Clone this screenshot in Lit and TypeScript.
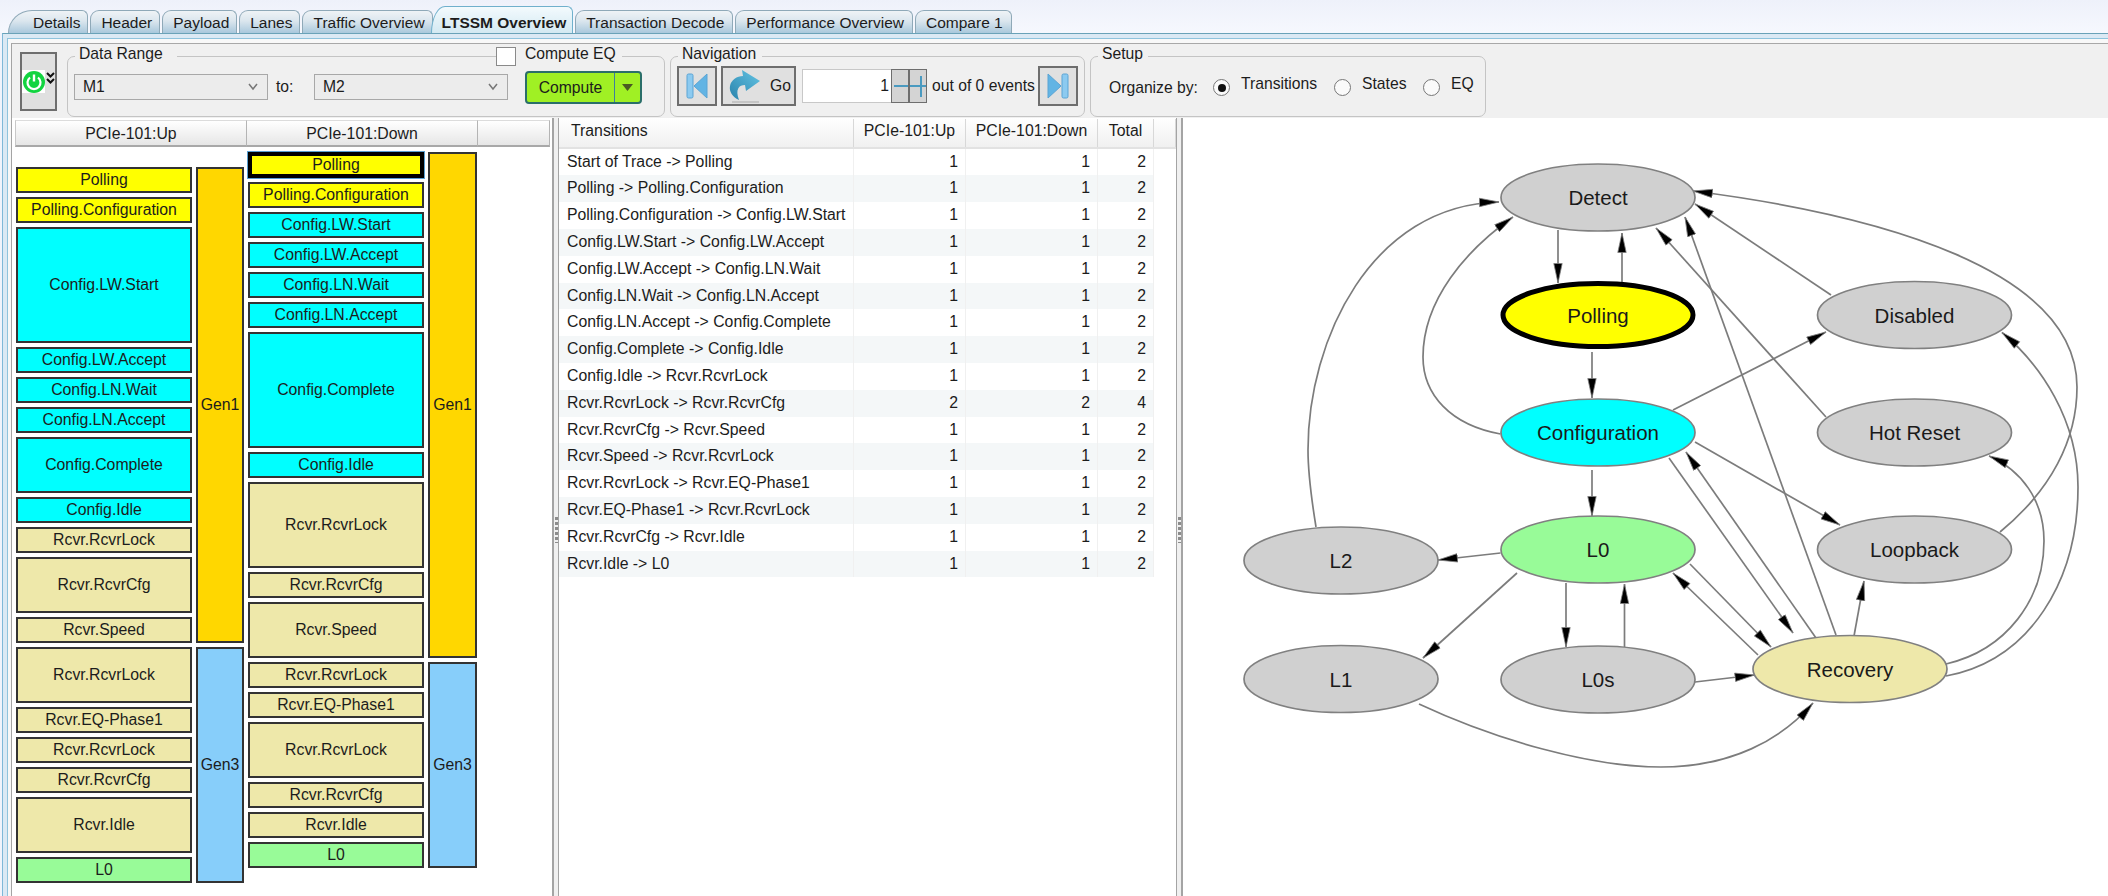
import { html, svg, css, LitElement } from 'lit';
import { customElement } from 'lit/decorators.js';
import { classMap } from 'lit/directives/class-map.js';

const TABS = ['Details', 'Header', 'Payload', 'Lanes', 'Traffic Overview', 'LTSSM Overview', 'Transaction Decode', 'Performance Overview', 'Compare 1'];

type Group = { gen: string, states: [string, number][] };

const LANES: { pad: number, groups: Group[] }[] = [
	{
		pad: 20,
		groups: [
			{
				gen: 'Gen1',
				states: [['Polling', 1], ['Polling.Configuration', 1], ['Config.LW.Start', 4], ['Config.LW.Accept', 1], ['Config.LN.Wait', 1], ['Config.LN.Accept', 1], ['Config.Complete', 2], ['Config.Idle', 1], ['Rcvr.RcvrLock', 1], ['Rcvr.RcvrCfg', 2], ['Rcvr.Speed', 1]],
			},
			{
				gen: 'Gen3',
				states: [['Rcvr.RcvrLock', 2], ['Rcvr.EQ-Phase1', 1], ['Rcvr.RcvrLock', 1], ['Rcvr.RcvrCfg', 1], ['Rcvr.Idle', 2], ['L0', 1]],
			},
		],
	},
	{
		pad: 5,
		groups: [
			{
				gen: 'Gen1',
				states: [['Polling', 1], ['Polling.Configuration', 1], ['Config.LW.Start', 1], ['Config.LW.Accept', 1], ['Config.LN.Wait', 1], ['Config.LN.Accept', 1], ['Config.Complete', 4], ['Config.Idle', 1], ['Rcvr.RcvrLock', 3], ['Rcvr.RcvrCfg', 1], ['Rcvr.Speed', 2]],
			},
			{
				gen: 'Gen3',
				states: [['Rcvr.RcvrLock', 1], ['Rcvr.EQ-Phase1', 1], ['Rcvr.RcvrLock', 2], ['Rcvr.RcvrCfg', 1], ['Rcvr.Idle', 1], ['L0', 1]],
			},
		],
	},
];

const ROWS: [string, number, number, number][] = [
	['Start of Trace -> Polling', 1, 1, 2],
	['Polling -> Polling.Configuration', 1, 1, 2],
	['Polling.Configuration -> Config.LW.Start', 1, 1, 2],
	['Config.LW.Start -> Config.LW.Accept', 1, 1, 2],
	['Config.LW.Accept -> Config.LN.Wait', 1, 1, 2],
	['Config.LN.Wait -> Config.LN.Accept', 1, 1, 2],
	['Config.LN.Accept -> Config.Complete', 1, 1, 2],
	['Config.Complete -> Config.Idle', 1, 1, 2],
	['Config.Idle -> Rcvr.RcvrLock', 1, 1, 2],
	['Rcvr.RcvrLock -> Rcvr.RcvrCfg', 2, 2, 4],
	['Rcvr.RcvrCfg -> Rcvr.Speed', 1, 1, 2],
	['Rcvr.Speed -> Rcvr.RcvrLock', 1, 1, 2],
	['Rcvr.RcvrLock -> Rcvr.EQ-Phase1', 1, 1, 2],
	['Rcvr.EQ-Phase1 -> Rcvr.RcvrLock', 1, 1, 2],
	['Rcvr.RcvrCfg -> Rcvr.Idle', 1, 1, 2],
	['Rcvr.Idle -> L0', 1, 1, 2],
];

// graph coordinates are page pixels, the svg viewBox starts at the panel origin
const NODES: { name: string, x: number, y: number, cls: string }[] = [
	{ name: 'Detect', x: 1597, y: 197.5, cls: 'grey' },
	{ name: 'Polling', x: 1597, y: 315, cls: 'cur' },
	{ name: 'Configuration', x: 1597, y: 432.5, cls: 'cyan' },
	{ name: 'L0', x: 1597, y: 549.5, cls: 'green' },
	{ name: 'L0s', x: 1597, y: 679.5, cls: 'grey' },
	{ name: 'L1', x: 1340, y: 679, cls: 'grey' },
	{ name: 'L2', x: 1340, y: 560.5, cls: 'grey' },
	{ name: 'Recovery', x: 1849, y: 669, cls: 'khaki' },
	{ name: 'Disabled', x: 1913.5, y: 315, cls: 'grey' },
	{ name: 'Hot Reset', x: 1913.5, y: 432.5, cls: 'grey' },
	{ name: 'Loopback', x: 1913.5, y: 549.5, cls: 'grey' },
];

const EDGES = [
	'M1557 230 L1557 283',
	'M1621 283 L1621 233',
	'M1591 352 L1591 398',
	'M1591 470 L1591 516',
	'M1499.5 434 C1450 425 1422 395 1422 357 C1422 300 1465 250 1512 217',
	'M1315 527 C1309 490 1307 470 1307 450 C1307 340 1370 205 1498 202',
	'M1830 295 L1694 204',
	'M1825 417 L1655 228',
	'M1835 635 L1684 217',
	'M1999 532 C2050 490 2076 440 2076 387 C2076 270 1880 215 1692 191',
	'M1672 410 L1825 332',
	'M1694 442 L1839 525',
	'M1668 458 L1792 633',
	'M1815 638 L1685 452',
	'M1689 564 L1770 647',
	'M1757 655 L1672 573',
	'M1499.5 553 L1437 560',
	'M1516 573 L1422 658',
	'M1565 583 L1565 647',
	'M1623.5 647 L1623.5 584',
	'M1694 682 L1753.5 675',
	'M1853 636 L1863 581',
	'M1418 704 C1495 740 1590 767 1660 767 C1730 767 1780 740 1812 703',
	'M1945 664 C2005 650 2043 600 2043 541 C2043 500 2020 470 1988 456',
	'M1945 676 C2030 660 2077 580 2077 487 C2077 420 2040 365 2001 332.5',
];

function stateClass(name: string) {
	if (name.startsWith('Polling')) return 'yellow';
	if (name.startsWith('Config')) return 'cyan';
	if (name === 'L0') return 'green';
	return 'khaki';
}

const chevron = html`<svg class="chev" width="10" height="8" viewBox="0 0 10 8"><path d="M1 1 L5 6 L9 1" fill="none" stroke="#777" stroke-width="1.5"/></svg>`;

const skipIcon = (flip: boolean) => html`<svg width="22" height="26" viewBox="0 0 22 26">
	<g transform=${flip ? 'translate(22 0) scale(-1 1)' : ''}>
		<rect x="1" y="1" width="6" height="24" rx="1.5" fill="#8ccaf0" stroke="#5aa4d4"/>
		<path d="M21 1 L8 13 L21 25 Z" fill="#62b4e4" stroke="#5aa4d4"/>
	</g>
</svg>`;

@customElement('app-root')
export class AppRoot extends LitElement {
	static styles = css`:host {
		display: block;
		width: 2108px;
		height: 896px;
		overflow: hidden;
		font-family: "Liberation Sans", Arial, sans-serif;
		font-size: 15.5px;
		color: #1c1c1c;
		background: #f1f4fc;
	}

	.page {
		height: 896px;
		display: flex;
		flex-direction: column;
	}

	.tabs {
		height: 33px;
		display: flex;
		align-items: flex-end;
		padding-left: 8px;
		gap: 2px;
		flex: none;
		background: linear-gradient(#eef1fa, #f6f8fe);
	}

	.tab {
		height: 23px;
		line-height: 24px;
		padding: 0 7px 0 10px;
		box-sizing: border-box;
		white-space: nowrap;
		border: 1px solid #8fa9b8;
		border-bottom: none;
		border-radius: 9px 6px 0 0;
		background: linear-gradient(#eff3f6, #dbe6ee 45%, #a9c8dc);
	}

	.tab.first {
		padding-left: 24px;
		border-top-left-radius: 24px 23px;
	}

	.tab.active {
		height: 27px;
		line-height: 32px;
		font-weight: bold;
		margin-left: -4px;
		padding-right: 6px;
		border-color: #6fb0cc;
		border-top-left-radius: 14px 27px;
		background: linear-gradient(#f3fafd, #d3e9f2);
	}

	.tab.active ~ .tab {
		padding-right: 8px;
	}

	.frame {
		flex: 1;
		min-height: 0;
		margin-left: 2px;
		padding: 4px 0 0 4px;
		border-left: 1px solid #7fb8d8;
		border-top: 1px solid #6aa2b8;
		background: #dbe9f4;
		display: flex;
	}

	.frame2 {
		flex: 1;
		min-width: 0;
		padding: 4px 0 0 3px;
		border-left: 1px solid #8fc3dd;
		border-top: 1px solid #8fc3dd;
		background: #f8f8f8;
		display: flex;
	}

	.content {
		flex: 1;
		min-width: 0;
		border-left: 1px solid #a4a4a4;
		border-top: 1px solid #a8a8a8;
		background: #f0f0f0;
		display: flex;
		flex-direction: column;
	}

	.toolbar {
		height: 74px;
		flex: none;
		display: flex;
		align-items: flex-start;
		padding-left: 8px;
		font-size: 15.7px;
	}

	.power {
		width: 37px;
		height: 59px;
		box-sizing: border-box;
		margin-top: 8px;
		border: 2px solid #6e6e6e;
		background: #e0e0e0;
		display: flex;
		align-items: center;
		justify-content: center;
	}

	.group {
		position: relative;
		height: 61px;
		box-sizing: border-box;
		margin-top: 12px;
		border: 1px solid #c4c4c4;
		border-radius: 7px;
		display: flex;
		align-items: flex-start;
	}

	.legend {
		position: absolute;
		top: -13px;
		height: 20px;
		line-height: 20px;
		background: #f0f0f0;
		white-space: nowrap;
	}

	.data {
		width: 598px;
		margin-left: 10px;
		padding: 17px 0 0 6px;
	}

	.data .legend {
		left: 7px;
		padding: 0 14px 0 4px;
	}

	.legend.eq {
		left: 428px;
		top: -10px;
		height: 20px;
		width: 126px;
		padding: 0;
		display: flex;
		align-items: flex-start;
	}

	.eq span {
		line-height: 14px;
		margin-left: 9px;
	}

	.check {
		width: 20px;
		height: 19px;
		box-sizing: border-box;
		border: 1px solid #8a8a8a;
		background: #fff;
	}

	.combo {
		width: 194px;
		height: 26px;
		box-sizing: border-box;
		border: 1px solid #a8a8a8;
		background: #ececec;
		padding: 0 9px 0 8px;
		display: flex;
		align-items: center;
		justify-content: space-between;
	}

	.to {
		width: 46px;
		height: 26px;
		line-height: 26px;
		padding-left: 8px;
		box-sizing: border-box;
	}

	.compute {
		width: 117px;
		height: 33px;
		box-sizing: border-box;
		margin: -3px 0 0 17px;
		border: 2px solid #2b6f6a;
		border-radius: 4px;
		background: #a0f024;
		display: flex;
	}

	.compute .label {
		flex: 1;
		text-align: center;
		line-height: 29px;
		border-right: 1px solid #3c7fa0;
	}

	.compute .drop {
		width: 25px;
		display: flex;
		align-items: center;
		justify-content: center;
	}

	.nav {
		width: 415px;
		margin-left: 5px;
		padding: 9px 0 0 6px;
	}

	.nav .legend {
		left: 7px;
		padding: 0 6px 0 4px;
	}

	.btn {
		height: 40px;
		box-sizing: border-box;
		border: 2px solid #6e6e6e;
		background: #e0e0e0;
		display: flex;
		align-items: center;
		justify-content: center;
		flex: none;
	}

	.btn.skip {
		width: 40px;
	}

	.btn.go {
		width: 75px;
		margin-left: 4px;
		padding-left: 3px;
		gap: 9px;
	}

	.num {
		width: 89px;
		height: 34px;
		box-sizing: border-box;
		margin: 3px 0 0 6px;
		background: #fff;
		border: 1px solid #c8c8c8;
		border-right: none;
		text-align: right;
		line-height: 32px;
		padding-right: 2px;
	}

	.spin {
		width: 18px;
		height: 34px;
		box-sizing: border-box;
		margin-top: 3px;
		border: 1px solid #6e6e6e;
		background: #d4d4d4;
	}

	.events {
		width: 111px;
		height: 40px;
		line-height: 40px;
		padding-left: 5px;
		box-sizing: border-box;
		white-space: nowrap;
	}

	.setup {
		width: 396px;
		margin-left: 5px;
		padding-left: 18px;
		align-items: center;
	}

	.setup .legend {
		left: 7px;
		padding: 0 5px 0 4px;
	}

	.organize {
		margin-top: 2px;
		width: 104px;
		white-space: nowrap;
	}

	.radio {
		width: 17px;
		height: 17px;
		box-sizing: border-box;
		margin-top: 2px;
		border: 1.5px solid #777;
		border-radius: 50%;
		background: #fafafa;
		display: flex;
		align-items: center;
		justify-content: center;
		flex: none;
	}

	.radio i {
		width: 8px;
		height: 8px;
		border-radius: 50%;
		background: #111;
	}

	.opt {
		margin: 0 0 6px 11px;
		white-space: nowrap;
	}

	.opt.t { width: 93px; }
	.opt.s { width: 61px; }

	.panels {
		flex: 1;
		min-height: 0;
		display: flex;
		font-size: 15.8px;
	}

	.left {
		width: 540px;
		flex: none;
		box-sizing: border-box;
		background: #fff;
		padding: 2px 0 0 3px;
		overflow: hidden;
	}

	.lane-head {
		display: flex;
		height: 27px;
		box-sizing: border-box;
	}

	.lane-head div {
		box-sizing: border-box;
		text-align: center;
		line-height: 25px;
		background: linear-gradient(#fff, #e6e6e6);
		border: 1px solid #b4b4b4;
		border-left: none;
		border-top: 1px solid #dcdcdc;
		border-bottom: 2px solid #a8a8a8;
	}

	.lane-head .h1 { width: 232px; border-left: 1px solid #c8c8c8; }
	.lane-head .h2 { width: 231px; }
	.lane-head .h3 { width: 72px; }

	.lanes {
		display: flex;
		padding-left: 1px;
		gap: 4px;
	}

	.lane {
		width: 228px;
		display: flex;
		flex-direction: column;
		gap: 4px;
	}

	.lane.second {
		width: 229px;
	}

	.grp {
		display: flex;
		gap: 4px;
	}

	.states {
		width: 176px;
		flex: none;
		display: flex;
		flex-direction: column;
		gap: 4px;
	}

	.box {
		box-sizing: border-box;
		border: 2px solid #333;
		display: flex;
		align-items: center;
		justify-content: center;
		white-space: nowrap;
	}

	.box.focus {
		border: 4px solid #000;
		outline: 1px solid #5a9fd0;
	}

	.gen {
		flex: 1;
	}

	.yellow { background: #ffff00; }
	.cyan { background: #00ffff; }
	.khaki { background: #eee8aa; }
	.green { background: #98fb98; }
	.gold { background: #ffd700; }
	.sky { background: #87cefa; }

	.gutter {
		width: 7px;
		flex: none;
		box-sizing: border-box;
		border-left: 2px solid #a4a4a4;
		border-right: 1px solid #a4a4a4;
		background: #f0f0f0;
		padding-top: 399px;
	}

	.gutter.right {
		border-right: 2px solid #a4a4a4;
		border-left: 1px solid #a4a4a4;
	}

	.grip {
		height: 26px;
		width: 3px;
		margin-left: 1px;
		background: repeating-linear-gradient(#8c8c8c 0 3px, transparent 3px 5px);
	}

	.table {
		width: 617px;
		flex: none;
		background: #fff;
	}

	.thead, .row {
		display: grid;
		grid-template-columns: 295px 112px 132px 56px 22px;
	}

	.thead {
		height: 30.6px;
		box-sizing: border-box;
		padding-top: 1px;
		border-bottom: 2px solid #e2e2e2;
		background: linear-gradient(#fff, #f0f0f0);
	}

	.thead div {
		line-height: 24px;
		text-align: center;
		border-right: 1px solid #d8d8d8;
		white-space: nowrap;
	}

	.thead div:first-child {
		text-align: left;
		padding-left: 12px;
	}

	.row {
		height: 26.8px;
		line-height: 26.8px;
	}

	.row.alt div {
		background: #f4f7f8;
	}

	.row div {
		border-right: 1px solid #f0f0f0;
		text-align: right;
		padding-right: 7px;
		white-space: nowrap;
	}

	.row div:first-child {
		text-align: left;
		padding: 0 0 0 8px;
	}

	.row div:nth-child(5) {
		background: none;
		border: none;
	}

	.graph {
		flex: 1;
		min-width: 0;
		background: #fff;
		overflow: hidden;
	}

	.graph svg {
		display: block;
	}

	.edge {
		fill: none;
		stroke: #7c7c7c;
		stroke-width: 1.7;
	}

	.node {
		stroke: #808080;
		stroke-width: 1.7;
	}

	.node.grey { fill: #d0d0d0; }
	.node.cyan { fill: #00ffff; }
	.node.green { fill: #98fb98; }
	.node.khaki { fill: #eee8aa; }
	.node.cur { fill: #ffff00; stroke: #000; stroke-width: 5; }

	.node-label {
		font-size: 20.5px;
		fill: #1a1a1a;
		text-anchor: middle;
		dominant-baseline: central;
	}
	`;

	renderToolbar() {
		return html`<div class="toolbar">
			<div class="power">
				<svg width="33" height="26" viewBox="0 0 33 26">
					<rect x="0" y="1" width="23" height="23" fill="#fff"/>
					<circle cx="12" cy="13" r="11" fill="#12d440"/>
					<path d="M8 8.5 A6.5 6.5 0 1 0 16 8.5" fill="none" stroke="#fff" stroke-width="2.2"/>
					<path d="M12 5.5 V12.5" stroke="#fff" stroke-width="2.4"/>
					<path d="M25 4 L28.5 7.5 L32 4 M25 10 L28.5 13.5 L32 10" fill="none" stroke="#111" stroke-width="2"/>
				</svg>
			</div>
			<div class="group data">
				<div class="legend">Data Range</div>
				<div class="legend eq"><div class="check"></div><span>Compute EQ</span></div>
				<div class="combo"><span>M1</span>${chevron}</div>
				<div class="to">to:</div>
				<div class="combo"><span>M2</span>${chevron}</div>
				<div class="compute">
					<div class="label">Compute</div>
					<div class="drop">
						<svg width="11" height="7" viewBox="0 0 11 7"><path d="M0 0 H11 L5.5 7 Z" fill="#4a5a22"/></svg>
					</div>
				</div>
			</div>
			<div class="group nav">
				<div class="legend">Navigation</div>
				<div class="btn skip">${skipIcon(false)}</div>
				<div class="btn go">
					<svg width="32" height="34" viewBox="0 0 32 34">
						<defs>
							<linearGradient id="goFill" x1="0" y1="1" x2="1" y2="0">
								<stop offset="0" stop-color="#2a83ac"/>
								<stop offset="1" stop-color="#63c4e4"/>
							</linearGradient>
						</defs>
						<path d="M13 1 L31 12 L17 22 L16 16 C10 16 6 20 10 31 C3 28 0 22 1 17 C2 11 8 7 14 7 Z" fill="url(#goFill)"/>
						<path d="M3 33 H30" stroke="#bdbdbd" stroke-width="1.5"/>
					</svg>
					<span>Go</span>
				</div>
				<div class="num">1</div>
				<div class="spin">
					<svg width="16" height="32" viewBox="0 0 16 32"><path d="M2 16 H16" stroke="#4a9ac0" stroke-width="2"/></svg>
				</div>
				<div class="spin">
					<svg width="16" height="32" viewBox="0 0 16 32"><path d="M0 16 H16 M11 6 V27" stroke="#4a9ac0" stroke-width="2"/></svg>
				</div>
				<div class="events">out of 0 events</div>
				<div class="btn skip">${skipIcon(true)}</div>
			</div>
			<div class="group setup">
				<div class="legend">Setup</div>
				<div class="organize">Organize by:</div>
				<div class="radio"><i></i></div><div class="opt t">Transitions</div>
				<div class="radio"></div><div class="opt s">States</div>
				<div class="radio"></div><div class="opt">EQ</div>
			</div>
		</div>`;
	}

	renderLanes() {
		return html`<div class="left">
			<div class="lane-head">
				<div class="h1">PCIe-101:Up</div>
				<div class="h2">PCIe-101:Down</div>
				<div class="h3"></div>
			</div>
			<div class="lanes">
				${LANES.map((lane, li) => html`<div class=${classMap({ lane: true, second: li === 1 })} style="padding-top:${lane.pad}px">
					${lane.groups.map((g, gi) => html`<div class="grp">
						<div class="states">
							${g.states.map(([name, units], si) => html`<div
								class=${classMap({ box: true, [stateClass(name)]: true, focus: li === 1 && gi === 0 && si === 0 })}
								style="height:${units * 30 - 4}px">${name}</div>`)}
						</div>
						<div class="box gen ${g.gen === 'Gen1' ? 'gold' : 'sky'}">${g.gen}</div>
					</div>`)}
				</div>`)}
			</div>
		</div>`;
	}

	renderTable() {
		return html`<div class="table">
			<div class="thead">
				<div>Transitions</div>
				<div>PCIe-101:Up</div>
				<div>PCIe-101:Down</div>
				<div>Total</div>
				<div></div>
			</div>
			${ROWS.map((r, i) => html`<div class=${classMap({ row: true, alt: i % 2 === 1 })}>
				<div>${r[0]}</div><div>${r[1]}</div><div>${r[2]}</div><div>${r[3]}</div><div></div>
			</div>`)}
		</div>`;
	}

	renderGraph() {
		return html`<div class="graph">
			<svg width="926" height="778" viewBox="1182 118 926 778">
				<defs>
					<marker id="head" markerUnits="userSpaceOnUse" markerWidth="22" markerHeight="12" refX="20" refY="5" orient="auto">
						<path d="M0.5 0.8 L20 5 L0.5 9.2 Z" fill="#000" stroke="#808080" stroke-width="0.8"/>
					</marker>
				</defs>
				${EDGES.map(d => svg`<path class="edge" d=${d} marker-end="url(#head)"></path>`)}
				${NODES.map(n => svg`
					<ellipse class="node ${n.cls}" cx=${n.x} cy=${n.y} rx=${n.cls === 'cur' ? 95 : 97} ry=${n.cls === 'cur' ? 31.5 : 33.5}></ellipse>
					<text class="node-label" x=${n.x} y=${n.y}>${n.name}</text>`)}
			</svg>
		</div>`;
	}

	render() {
		return html`<div class="page">
			<div class="tabs">
				${TABS.map((t, i) => html`<div class=${classMap({ tab: true, first: i === 0, active: i === 5 })}>${t}</div>`)}
			</div>
			<div class="frame">
				<div class="frame2">
					<div class="content">
						${this.renderToolbar()}
						<div class="panels">
							${this.renderLanes()}
							<div class="gutter"><div class="grip"></div></div>
							${this.renderTable()}
							<div class="gutter right"><div class="grip"></div></div>
							${this.renderGraph()}
						</div>
					</div>
				</div>
			</div>
		</div>`;
	}
}

declare global {
	interface HTMLElementTagNameMap {
		"app-root": AppRoot,
	}
}
